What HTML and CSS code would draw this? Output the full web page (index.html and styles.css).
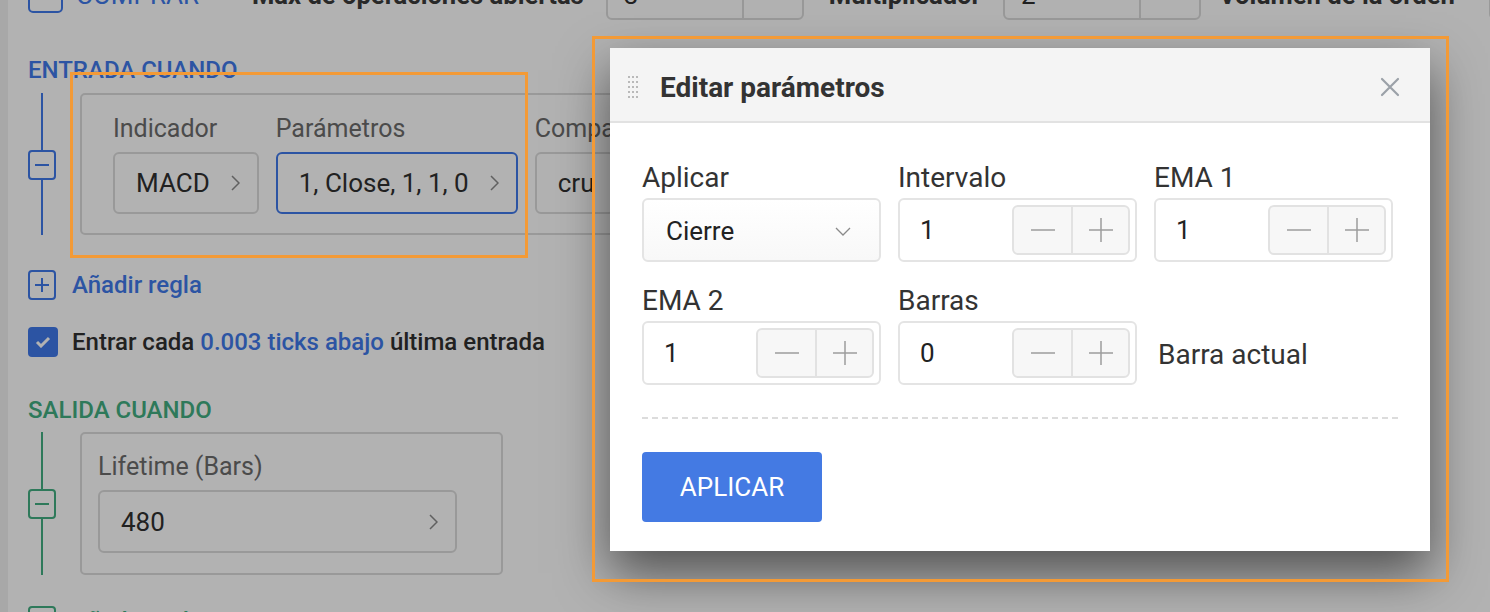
FILE: index.html
```html
<!DOCTYPE html>
<html lang="es">
<head>
  <meta charset="UTF-8">
  <meta name="viewport" content="width=device-width, initial-scale=1.0">
  <title>Editar parámetros</title>
  <link rel="stylesheet" href="styles.css">
</head>
<body>
  <div class="page">
    <main class="strategy">
      <!-- fila de la orden (cortada arriba por el scroll) -->
      <div class="order-row">
        <div class="side-pick">
          <span class="side-icon">
            <svg width="16" height="10" viewBox="0 0 16 10"><path d="M1 1l7 7 7-7" fill="none" stroke="currentColor" stroke-width="2"/></svg>
          </span>
          <span>COMPRAR</span>
        </div>
        <span class="row-label">Max de operaciones abiertas</span>
        <div class="num-box"><span class="num-val">3</span><span class="num-side"></span></div>
        <span class="row-label">Multiplicador</span>
        <div class="num-box short"><span class="num-val">2</span><span class="num-side"></span></div>
        <span class="row-label">Volumen de la orden</span>
        <div class="num-box last"><span class="num-val">1</span><span class="num-side"></span></div>
      </div>

      <!-- entrada -->
      <section class="block entry">
        <h3 class="section-title">ENTRADA CUANDO</h3>
        <div class="rule">
          <div class="rail">
            <span class="rail-line top"></span>
            <span class="toggle">
              <svg width="14" height="2" viewBox="0 0 14 2"><path d="M0 1h14" stroke="currentColor" stroke-width="2"/></svg>
            </span>
            <span class="rail-line fill"></span>
          </div>
          <div class="rule-card wide">
            <div class="field">
              <span class="field-label">Indicador</span>
              <button class="pick">MACD <svg class="chev" width="9" height="16" viewBox="0 0 9 16"><path d="M1 1l7 7-7 7" fill="none" stroke="currentColor" stroke-width="1.5"/></svg></button>
            </div>
            <div class="field">
              <span class="field-label">Parámetros</span>
              <button class="pick active">1, Close, 1, 1, 0 <svg class="chev" width="9" height="16" viewBox="0 0 9 16"><path d="M1 1l7 7-7 7" fill="none" stroke="currentColor" stroke-width="1.5"/></svg></button>
            </div>
            <div class="field">
              <span class="field-label">Compa</span>
              <button class="pick">cru</button>
            </div>
          </div>
        </div>
        <div class="add-rule">
          <span class="toggle">
            <svg width="14" height="14" viewBox="0 0 14 14"><path d="M0 7h14M7 0v14" stroke="currentColor" stroke-width="2"/></svg>
          </span>
          <span>Añadir regla</span>
        </div>
      </section>

      <div class="check-row">
        <span class="check-box">
          <svg width="16" height="12" viewBox="0 0 16 12"><path d="M2 6l4 4 8-8" fill="none" stroke="#fff" stroke-width="3"/></svg>
        </span>
        <span>Entrar cada <span class="link">0.003 ticks abajo</span> última entrada</span>
      </div>

      <!-- salida -->
      <section class="block exit">
        <h3 class="section-title">SALIDA CUANDO</h3>
        <div class="rule">
          <div class="rail">
            <span class="rail-line top"></span>
            <span class="toggle">
              <svg width="14" height="2" viewBox="0 0 14 2"><path d="M0 1h14" stroke="currentColor" stroke-width="2"/></svg>
            </span>
            <span class="rail-line fill"></span>
          </div>
          <div class="rule-card narrow">
            <div class="field grow">
              <span class="field-label">Lifetime (Bars)</span>
              <button class="pick full">480 <svg class="chev" width="9" height="16" viewBox="0 0 9 16"><path d="M1 1l7 7-7 7" fill="none" stroke="currentColor" stroke-width="1.5"/></svg></button>
            </div>
          </div>
        </div>
        <div class="add-rule">
          <span class="toggle">
            <svg width="14" height="14" viewBox="0 0 14 14"><path d="M0 7h14M7 0v14" stroke="currentColor" stroke-width="2"/></svg>
          </span>
          <span>Añadir regla</span>
        </div>
      </section>
    </main>
  </div>

  <div class="backdrop"></div>

  <!-- dialogo -->
  <div class="dialog">
    <div class="dialog-head">
      <svg class="grip" width="10" height="23" viewBox="0 0 10 23">
        <g fill="#b9b9b9">
          <rect x="0" y="0" width="2" height="2"/><rect x="4" y="0" width="2" height="2"/><rect x="8" y="0" width="2" height="2"/>
          <rect x="0" y="5" width="2" height="2"/><rect x="4" y="5" width="2" height="2"/><rect x="8" y="5" width="2" height="2"/>
          <rect x="0" y="10" width="2" height="2"/><rect x="4" y="10" width="2" height="2"/><rect x="8" y="10" width="2" height="2"/>
          <rect x="0" y="15" width="2" height="2"/><rect x="4" y="15" width="2" height="2"/><rect x="8" y="15" width="2" height="2"/>
          <rect x="0" y="20" width="2" height="2"/><rect x="4" y="20" width="2" height="2"/><rect x="8" y="20" width="2" height="2"/>
        </g>
      </svg>
      <h2 class="dialog-title">Editar parámetros</h2>
      <button class="close">
        <svg width="20" height="20" viewBox="0 0 20 20"><path d="M2 2l16 16M18 2L2 18" stroke="currentColor" stroke-width="2.2" stroke-linecap="round"/></svg>
      </button>
    </div>

    <div class="dialog-body">
      <div class="param-grid">
        <div class="param">
          <span class="param-label">Aplicar</span>
          <div class="select">
            <span>Cierre</span>
            <svg width="16" height="9" viewBox="0 0 16 9"><path d="M1 1l7 7 7-7" fill="none" stroke="#8a8a8a" stroke-width="1.3"/></svg>
          </div>
        </div>
        <div class="param">
          <span class="param-label">Intervalo</span>
          <div class="number">
            <span class="number-val">1</span>
            <div class="stepper">
              <span class="step"><svg width="24" height="24" viewBox="0 0 24 24"><path d="M0 12h24" stroke="#9d9d9d" stroke-width="1.5"/></svg></span>
              <span class="step"><svg width="24" height="24" viewBox="0 0 24 24"><path d="M0 12h24M12 0v24" stroke="#9d9d9d" stroke-width="1.5"/></svg></span>
            </div>
          </div>
        </div>
        <div class="param">
          <span class="param-label">EMA 1</span>
          <div class="number">
            <span class="number-val">1</span>
            <div class="stepper">
              <span class="step"><svg width="24" height="24" viewBox="0 0 24 24"><path d="M0 12h24" stroke="#9d9d9d" stroke-width="1.5"/></svg></span>
              <span class="step"><svg width="24" height="24" viewBox="0 0 24 24"><path d="M0 12h24M12 0v24" stroke="#9d9d9d" stroke-width="1.5"/></svg></span>
            </div>
          </div>
        </div>
        <div class="param">
          <span class="param-label">EMA 2</span>
          <div class="number">
            <span class="number-val">1</span>
            <div class="stepper">
              <span class="step"><svg width="24" height="24" viewBox="0 0 24 24"><path d="M0 12h24" stroke="#9d9d9d" stroke-width="1.5"/></svg></span>
              <span class="step"><svg width="24" height="24" viewBox="0 0 24 24"><path d="M0 12h24M12 0v24" stroke="#9d9d9d" stroke-width="1.5"/></svg></span>
            </div>
          </div>
        </div>
        <div class="param">
          <span class="param-label">Barras</span>
          <div class="number">
            <span class="number-val">0</span>
            <div class="stepper">
              <span class="step"><svg width="24" height="24" viewBox="0 0 24 24"><path d="M0 12h24" stroke="#9d9d9d" stroke-width="1.5"/></svg></span>
              <span class="step"><svg width="24" height="24" viewBox="0 0 24 24"><path d="M0 12h24M12 0v24" stroke="#9d9d9d" stroke-width="1.5"/></svg></span>
            </div>
          </div>
        </div>
        <div class="param-note">Barra actual</div>
      </div>

      <hr class="dashed">

      <button class="apply">APLICAR</button>
    </div>
  </div>

  <!-- marcas del tutorial -->
  <div class="mark mark-rule"></div>
  <div class="mark mark-dialog"></div>
</body>
</html>
```

FILE: styles.css
```css
* {
  box-sizing: border-box;
}

body {
  margin: 0;
  width: 1490px;
  height: 612px;
  overflow: hidden;
  position: relative;
  font-family: Roboto, "Liberation Sans", sans-serif;
  color: #303030;
  background: #fff;
}

button {
  font-family: inherit;
}

/* pagina de fondo */
.page {
  height: 100%;
  overflow: hidden;
  border-left: 8px solid #f1f1f1;
  padding-left: 20px;
}

.strategy {
  margin-top: -30px;
}

.order-row {
  display: flex;
  align-items: center;
  height: 50px;
  white-space: nowrap;
}

.side-pick {
  display: flex;
  flex-shrink: 0;
  align-items: center;
  gap: 13px;
  color: #4079ea;
  font-size: 26px;
  margin-right: 53px;
}

.side-icon {
  width: 35px;
  height: 36px;
  border: 2px solid currentColor;
  border-radius: 5px;
  display: flex;
  align-items: center;
  justify-content: center;
}

.row-label {
  flex-shrink: 0;
  font-size: 25.6px;
  font-weight: 700;
  color: #3c3c3c;
}

.num-box {
  display: flex;
  flex-shrink: 0;
  width: 198px;
  height: 50px;
  margin: 0 25px 0 22px;
  border: 2px solid #dcdcdc;
  border-radius: 6px;
}

.num-box.short {
  margin-right: 18px;
}

.num-box.last {
  margin-left: 34px;
}

.num-val {
  flex: 1;
  display: flex;
  align-items: center;
  padding-left: 16px;
  font-size: 26px;
}

.num-side {
  width: 60px;
  border-left: 2px solid #dcdcdc;
}

/* bloques de reglas */
.entry {
  color: #4079ea;
}

.exit {
  color: #42ae81;
}

.section-title {
  margin: 36px 0 9px;
  font-size: 24px;
  line-height: 28px;
  font-weight: 500;
}

.exit .section-title {
  margin-top: 39px;
  margin-bottom: 8px;
}

.rule {
  display: flex;
  gap: 24px;
  padding-bottom: 35px;
}

.exit .rule {
  padding-bottom: 31px;
}

.rail {
  width: 28px;
  flex-shrink: 0;
  display: flex;
  flex-direction: column;
  align-items: center;
}

.rail-line {
  width: 2px;
  background: currentColor;
}

.rail-line.top {
  height: 57px;
}

.rail-line.fill {
  flex: 1;
}

.toggle {
  width: 28px;
  height: 30px;
  flex-shrink: 0;
  border: 2px solid currentColor;
  border-radius: 4px;
  display: flex;
  align-items: center;
  justify-content: center;
}

.rule-card {
  display: flex;
  gap: 17px;
  border: 2px solid #dcdcdc;
  border-radius: 5px;
  color: #303030;
  white-space: nowrap;
}

.rule-card.wide {
  width: 560px;
  overflow: hidden;
  padding: 21px 0 19px 31px;
}

.rule-card.narrow {
  width: 423px;
  padding: 20px 44px 20px 16px;
}

.field {
  display: flex;
  flex-direction: column;
  gap: 10px;
}

.field.grow {
  flex: 1;
}

.field-label {
  font-size: 25px;
  line-height: 26px;
  color: #6c6c6c;
}

.pick {
  display: flex;
  align-items: center;
  gap: 21px;
  height: 62px;
  padding: 0 17px 0 21px;
  border: 2px solid #dcdcdc;
  border-radius: 6px;
  background: #fff;
  font-size: 26px;
  color: #303030;
}

.pick.active {
  border-color: #4079ea;
}

.pick.full {
  height: 63px;
  justify-content: space-between;
}

.chev {
  color: #8a8a8a;
}

.add-rule {
  display: flex;
  align-items: center;
  gap: 16px;
  font-size: 24px;
  font-weight: 500;
}

.check-row {
  display: flex;
  align-items: center;
  gap: 14px;
  margin-top: 27px;
  font-size: 24px;
  font-weight: 500;
  color: #303030;
}

.check-box {
  width: 30px;
  height: 30px;
  border-radius: 4px;
  background: #4079ea;
  display: flex;
  align-items: center;
  justify-content: center;
}

.link {
  color: #4079ea;
}

/* fondo oscuro */
.backdrop {
  position: absolute;
  inset: 0;
  background: rgba(0, 0, 0, 0.3);
}

/* dialogo */
.dialog {
  position: absolute;
  left: 610px;
  top: 48px;
  width: 820px;
  background: #fff;
  box-shadow: 0 22px 48px rgba(0, 0, 0, 0.55);
}

.dialog-head {
  display: flex;
  align-items: center;
  height: 75px;
  padding: 5px 30px 0 18px;
  background: #f4f4f4;
  border-bottom: 2px solid #e2e2e2;
}

.grip {
  margin-right: 22px;
}

.dialog-title {
  flex: 1;
  margin: 0;
  font-size: 28px;
  font-weight: 700;
  color: #333;
}

.close {
  border: none;
  background: none;
  padding: 0;
  color: #9ba1a8;
  display: flex;
}

.dialog-body {
  padding: 39px 32px 29px;
}

.param-grid {
  display: grid;
  grid-template-columns: repeat(3, 239px);
  column-gap: 17px;
  row-gap: 23px;
}

.param {
  display: flex;
  flex-direction: column;
  gap: 4px;
}

.param-label {
  font-size: 28px;
  line-height: 32px;
  color: #333;
}

.select,
.number {
  display: flex;
  align-items: center;
  height: 64px;
  border: 2px solid #e4e4e4;
  border-radius: 6px;
  font-size: 26px;
  color: #222;
}

.select {
  justify-content: space-between;
  padding: 2px 28px 0 22px;
  background: linear-gradient(#fff, #f8f8f8);
}

.number {
  padding: 0 5px 0 20px;
}

.number-val {
  flex: 1;
}

.stepper {
  display: flex;
  height: 50px;
  border: 2px solid #e2e2e2;
  border-radius: 6px;
  background: #f7f7f7;
}

.step {
  width: 57px;
  display: flex;
  align-items: center;
  justify-content: center;
}

.step + .step {
  border-left: 2px solid #e2e2e2;
}

.param-note {
  align-self: end;
  height: 64px;
  display: flex;
  align-items: center;
  padding: 2px 0 0 4px;
  font-size: 28px;
  color: #333;
}

.dashed {
  margin: 32px 0 33px;
  border: none;
  border-top: 2px dashed #dcdcdc;
}

.apply {
  width: 180px;
  height: 70px;
  border: none;
  border-radius: 4px;
  background: #447ae3;
  color: #fff;
  font-size: 26px;
}

/* marcas naranjas */
.mark {
  position: absolute;
  border: 3px solid #f39a36;
}

.mark-rule {
  left: 70px;
  top: 72px;
  width: 458px;
  height: 186px;
}

.mark-dialog {
  left: 592px;
  top: 36px;
  width: 857px;
  height: 546px;
}
```
